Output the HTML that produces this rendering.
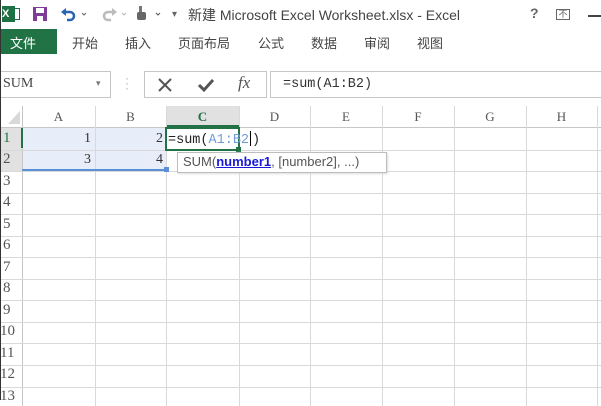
<!DOCTYPE html>
<html><head><meta charset="utf-8">
<style>
*{margin:0;padding:0;box-sizing:border-box}
body{width:601px;height:400px;overflow:hidden;background:#fff;position:relative;font-family:"Liberation Sans","Noto Sans CJK SC",sans-serif;color:#444}
.a{position:absolute}
.tab{position:absolute;top:33px;font-size:13px;color:#444}
.ser{font-family:"Liberation Serif","Noto Serif CJK SC",serif}
.mono{font-family:"Liberation Mono",monospace}
.vl{position:absolute;width:1px;background:#d9d9d9}
.hl{position:absolute;height:1px;background:#d9d9d9}
.ch{position:absolute;top:109px;font-size:13px;color:#555;text-align:center}
.rh{position:absolute;left:3px;width:20px;font-size:15px;color:#555;text-align:left}
</style></head><body>
<div class="a" style="left:2px;top:6px;width:13px;height:16px;background:#1e7145;color:#fff;font-size:11px;font-weight:bold;line-height:16px">X</div>
<div class="a" style="left:12px;top:8px;width:8px;height:12px;border:1px solid #1e7145"></div>
<svg class="a" style="left:32px;top:6px" width="16" height="16"><rect x="1" y="1" width="14" height="14" fill="#7d3c98"/><rect x="4" y="2" width="8" height="5" fill="#fff"/><rect x="5" y="10" width="6" height="5" fill="#fff"/></svg>
<svg class="a" style="left:60px;top:6px" width="30" height="16"><path d="M4 6 H10 A4 4 0 0 1 10 14 H7" stroke="#2a64b4" stroke-width="2.5" fill="none"/><path d="M1 6 L6 2 L6 10Z" fill="#2a64b4"/><path d="M22 7 l2 2 l2 -2" stroke="#666" fill="none"/></svg>
<svg class="a" style="left:100px;top:6px" width="30" height="16"><path d="M14 6 H8 A4 4 0 0 0 8 14 H11" stroke="#bbb" stroke-width="2.5" fill="none"/><path d="M17 6 L12 2 L12 10Z" fill="#bbb"/><path d="M22 7 l2 2 l2 -2" stroke="#bbb" fill="none"/></svg>
<svg class="a" style="left:134px;top:4px" width="34" height="18"><rect x="5" y="2" width="3" height="8" fill="#777"/><rect x="3" y="8" width="9" height="8" rx="2" fill="#666"/><path d="M22 9 l2 2 l2 -2" stroke="#555" fill="none"/></svg>
<div class="a" style="left:172px;top:9px;font-size:10px;color:#666">▾</div>
<div class="a" style="left:188px;top:5px;font-size:14px;color:#444">新建 Microsoft Excel Worksheet.xlsx - Excel</div>
<div class="a" style="left:530px;top:5px;font-size:14px;color:#666;font-weight:bold">?</div>
<div class="a" style="left:556px;top:9px;width:14px;height:11px;border:1px solid #666;font-size:9px;line-height:9px;text-align:center;color:#666">不</div>
<div class="a" style="left:588px;top:15px;width:13px;height:2px;background:#444"></div>
<div class="a" style="left:0;top:29px;width:57px;height:25px;background:#217346"></div>
<div class="tab" style="left:10px;color:#fff">文件</div>
<div class="tab" style="left:72px">开始</div>
<div class="tab" style="left:125px">插入</div>
<div class="tab" style="left:178px">页面布局</div>
<div class="tab" style="left:258px">公式</div>
<div class="tab" style="left:311px">数据</div>
<div class="tab" style="left:364px">审阅</div>
<div class="tab" style="left:417px">视图</div>
<div class="a" style="left:0;top:71px;width:111px;height:27px;border:1px solid #c6c6c6;border-left:none"></div>
<div class="a ser" style="left:3px;top:76px;font-size:14px;color:#444">SUM</div>
<div class="a" style="left:96px;top:78px;font-size:9px;color:#777">▾</div>
<div class="a" style="left:125px;top:76px;font-size:12px;color:#aaa;line-height:5px">·<br>·<br>·</div>
<div class="a" style="left:144px;top:71px;width:123px;height:27px;border:1px solid #c6c6c6"></div>
<svg class="a" style="left:157px;top:77px" width="16" height="16"><path d="M2 2 L14 14 M14 2 L2 14" stroke="#555" stroke-width="2"/></svg>
<svg class="a" style="left:197px;top:77px" width="18" height="16"><path d="M2 8 L7 13 L16 3" stroke="#555" stroke-width="3" fill="none"/></svg>
<div class="a ser" style="left:238px;top:73px;font-size:17px;font-style:italic;color:#555">fx</div>
<div class="a" style="left:270px;top:71px;width:340px;height:27px;border:1px solid #c6c6c6"></div>
<div class="a mono" style="left:283px;top:77px;font-size:13.5px;color:#333">=sum(A1:B2)</div>
<svg class="a" style="left:8px;top:111px" width="12" height="14"><path d="M12 0 V13 H0Z" fill="#d8d8d8"/></svg>
<div class="a" style="left:166px;top:106px;width:73px;height:21px;background:#e1e1e1;border-bottom:2px solid #217346"></div>
<div class="hl" style="left:0;top:127px;width:601px;background:#c6c6c6"></div>
<div class="a" style="left:22px;top:128px;width:144px;height:43px;background:#e8eef9"></div>
<div class="a" style="left:0;top:128px;width:22px;height:43px;background:#e1e1e1"></div>
<div class="vl" style="left:22px;top:106px;height:300px;background:#c6c6c6"></div>
<div class="vl" style="left:95px;top:106px;height:300px"></div>
<div class="vl" style="left:166px;top:106px;height:300px"></div>
<div class="vl" style="left:239px;top:106px;height:300px"></div>
<div class="vl" style="left:310px;top:106px;height:300px"></div>
<div class="vl" style="left:382px;top:106px;height:300px"></div>
<div class="vl" style="left:454px;top:106px;height:300px"></div>
<div class="vl" style="left:526px;top:106px;height:300px"></div>
<div class="vl" style="left:597px;top:106px;height:300px"></div>
<div class="hl" style="left:0;top:150px;width:601px"></div>
<div class="hl" style="left:0;top:171px;width:601px"></div>
<div class="hl" style="left:0;top:193px;width:601px"></div>
<div class="hl" style="left:0;top:214px;width:601px"></div>
<div class="hl" style="left:0;top:236px;width:601px"></div>
<div class="hl" style="left:0;top:257px;width:601px"></div>
<div class="hl" style="left:0;top:279px;width:601px"></div>
<div class="hl" style="left:0;top:300px;width:601px"></div>
<div class="hl" style="left:0;top:322px;width:601px"></div>
<div class="hl" style="left:0;top:343px;width:601px"></div>
<div class="hl" style="left:0;top:365px;width:601px"></div>
<div class="hl" style="left:0;top:387px;width:601px"></div>
<div class="ch ser" style="left:22px;width:73px">A</div>
<div class="ch ser" style="left:95px;width:71px">B</div>
<div class="ch ser" style="left:166px;width:73px;color:#217346;font-weight:bold">C</div>
<div class="ch ser" style="left:239px;width:71px">D</div>
<div class="ch ser" style="left:310px;width:72px">E</div>
<div class="ch ser" style="left:382px;width:72px">F</div>
<div class="ch ser" style="left:454px;width:72px">G</div>
<div class="ch ser" style="left:526px;width:71px">H</div>
<div class="rh ser" style="top:130px;color:#217346">1</div>
<div class="rh ser" style="top:151px">2</div>
<div class="rh ser" style="top:173px">3</div>
<div class="rh ser" style="top:194px">4</div>
<div class="rh ser" style="top:216px">5</div>
<div class="rh ser" style="top:237px">6</div>
<div class="rh ser" style="top:259px">7</div>
<div class="rh ser" style="top:280px">8</div>
<div class="rh ser" style="top:302px">9</div>
<div class="rh ser" style="top:323px;left:0">10</div>
<div class="rh ser" style="top:345px;left:0">11</div>
<div class="rh ser" style="top:366px;left:0">12</div>
<div class="rh ser" style="top:388px;left:0">13</div>
<div class="a" style="left:0;top:0;width:1px;height:400px;background:#333"></div>
<div class="a" style="left:21px;top:128px;width:2px;height:20px;background:#217346"></div>
<div class="a" style="left:22px;top:169px;width:144px;height:2px;background:#5b8fd6"></div>
<div class="a" style="left:164px;top:167px;width:5px;height:5px;background:#5b8fd6"></div>
<div class="a ser" style="left:22px;top:131px;width:69px;text-align:right;font-size:14px;color:#333">1</div>
<div class="a ser" style="left:95px;top:131px;width:68px;text-align:right;font-size:14px;color:#333">2</div>
<div class="a ser" style="left:22px;top:152px;width:69px;text-align:right;font-size:14px;color:#333">3</div>
<div class="a ser" style="left:95px;top:152px;width:68px;text-align:right;font-size:14px;color:#333">4</div>
<div class="a" style="left:165px;top:127px;width:75px;height:24px;border:2px solid #217346;background:#fff"></div>
<div class="a" style="left:236px;top:147px;width:5px;height:5px;background:#217346"></div>
<div class="a mono" style="left:168px;top:131px;font-size:13.5px;color:#222;white-space:nowrap">=sum(<span style="color:#6f9bd8">A1:B2</span><span style="display:inline-block;width:1px;height:15px;background:#000;margin:0 1px;vertical-align:-3px"></span>)</div>
<div class="a" style="left:177px;top:152px;width:210px;height:21px;border:1px solid #bdbdbd;background:#fff;box-shadow:1px 1px 2px #ddd"></div>
<div class="a" style="left:183px;top:154px;font-size:13px;color:#555;white-space:nowrap">SUM(<b style="color:#1a1ad6;text-decoration:underline">number1</b>, [number2], ...)</div>
</body></html>
